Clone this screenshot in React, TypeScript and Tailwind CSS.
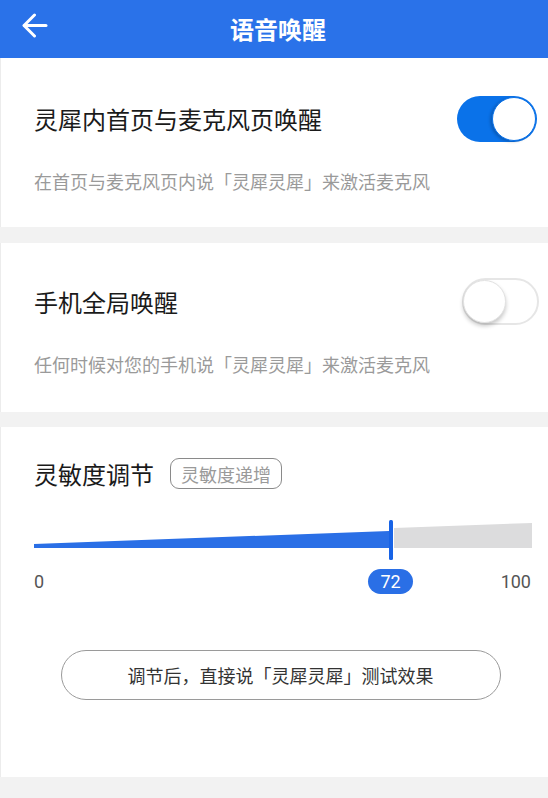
import React from "react";

const FONT = { fontFamily: '"Noto Sans CJK SC", "Noto Sans", sans-serif' };
const NUM_FONT = { fontFamily: 'Roboto, "Noto Sans CJK SC", sans-serif' };

const SLIDER_W = 498;
const FILL_END = 355;
const value = 72;

// 开关
const Toggle = ({ on }: { on: boolean }) =>
  on ? (
    <div className="flex h-[46px] w-[80px] items-center justify-end rounded-full bg-[#0a72e9] pr-[1px]">
      <div className="h-[44px] w-[44px] rounded-full border border-[#0a72e9] bg-white shadow-[-2px_1px_3px_rgba(0,0,0,0.2)]" />
    </div>
  ) : (
    <div className="flex h-[47px] w-[77px] items-center rounded-full border-2 border-[#e6e6e6] bg-white">
      <div className="-ml-[1px] h-[43px] w-[43px] rounded-full border border-[#e2e2e2] bg-white shadow-[0_3px_4px_rgba(0,0,0,0.22)]" />
    </div>
  );

const Section = ({
  title,
  desc,
  on,
  top,
  right,
}: {
  title: string;
  desc: string;
  on: boolean;
  top: string;
  right: string;
}) => (
  <div className={`flex h-[169px] flex-col border-l border-[#ececec] bg-white pl-[33px] ${right} ${top}`}>
    <div className="flex items-center justify-between">
      <span className="text-[24px] leading-[32px] text-[#1a1a1a]">{title}</span>
      <Toggle on={on} />
    </div>
    <p className="mt-[26px] text-[18px] leading-[26px] text-[#9a9a9a]">{desc}</p>
  </div>
);

export default function App() {
  // 滑块位置 -> 数值气泡居中
  const thumbCenter = FILL_END + 2;

  return (
    <div className="flex h-[798px] w-[548px] flex-col bg-[#f2f2f2]" style={FONT}>
      {/* 顶栏 */}
      <div className="relative flex h-[58px] shrink-0 items-center justify-center bg-[#2a72e9]">
        <svg
          className="absolute left-[22px] top-[13px]"
          width="26"
          height="25"
          viewBox="0 0 26 25"
          fill="none"
          stroke="white"
          strokeWidth="3"
          strokeLinecap="round"
          strokeLinejoin="round"
        >
          <path d="M24 12.5 H2.5" />
          <path d="M12.5 2 L2 12.5 L12.5 23" />
        </svg>
        <span className="ml-[8px] text-[24px] font-bold leading-none text-white">语音唤醒</span>
      </div>

      <Section
        title="灵犀内首页与麦克风页唤醒"
        desc="在首页与麦克风页内说「灵犀灵犀」来激活麦克风"
        on
        top="pt-[38px]"
        right="pr-[11px]"
      />
      <div className="h-[16px] shrink-0" />
      <Section
        title="手机全局唤醒"
        desc="任何时候对您的手机说「灵犀灵犀」来激活麦克风"
        on={false}
        top="pt-[35px]"
        right="pr-[9px]"
      />
      <div className="h-[15px] shrink-0" />

      {/* 灵敏度调节 */}
      <div className="flex h-[350px] shrink-0 flex-col border-l border-[#ececec] bg-white pl-[33px] pr-[17px] pt-[31px]">
        <div className="flex h-[31px] items-center gap-[16px]">
          <span className="text-[24px] leading-[32px] text-[#1a1a1a]">灵敏度调节</span>
          <span className="flex h-[31px] items-center rounded-[9px] border border-[#8a8a8a] px-[10px] text-[18px] leading-none text-[#9a9a9a]">
            灵敏度递增
          </span>
        </div>

        <svg className="mt-[31px]" width={SLIDER_W} height="40" viewBox={`0 0 ${SLIDER_W} 40`}>
          <polygon points={`0,24 ${FILL_END},11 ${FILL_END},28 0,28`} fill="#2a6fe6" />
          <polygon points={`360,8 ${SLIDER_W},3 ${SLIDER_W},28 360,28`} fill="#dcdcdd" />
          <rect x={FILL_END} y="0" width="4" height="40" rx="1.5" fill="#1763e6" />
        </svg>

        <div className="relative mt-[9px] flex h-[25px] items-center justify-between text-[18px] text-[#555]" style={NUM_FONT}>
          <span>0</span>
          <span
            className="absolute top-0 flex h-[25px] w-[45px] items-center justify-center rounded-full bg-[#2a6fe6] text-white"
            style={{ left: thumbCenter - 23 }}
          >
            {value}
          </span>
          <span>100</span>
        </div>

        <div className="mt-[56px] flex justify-center pr-[4px]">
          <button className="flex h-[50px] w-[440px] items-center justify-center rounded-full border border-[#9a9a9a] bg-white text-[18px] text-[#333]">
            调节后，直接说「灵犀灵犀」测试效果
          </button>
        </div>
      </div>
    </div>
  );
}
